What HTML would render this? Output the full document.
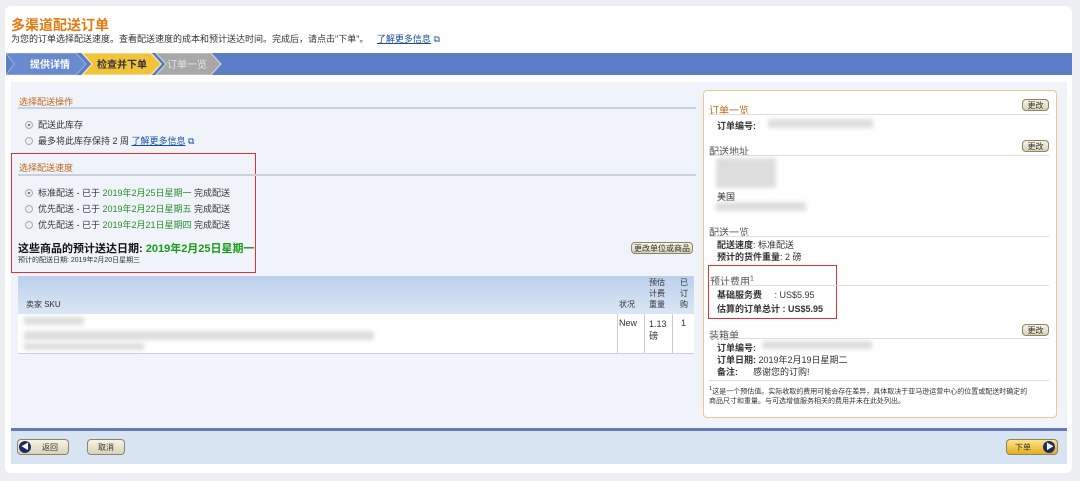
<!DOCTYPE html>
<html><head><meta charset="utf-8"><style>
*{margin:0;padding:0;box-sizing:border-box}
body{width:1080px;height:481px;background:#eceef1;font-family:"Liberation Sans","Noto Sans CJK SC",sans-serif;font-size:9px;color:#333;position:relative;overflow:hidden}
.a{position:absolute;white-space:nowrap}
.card{position:absolute;left:5px;top:6px;width:1067px;height:467px;background:#fff;border-radius:6px}
.g{color:#2a8a2a}
.blur{position:absolute;background:#ddd;filter:blur(2px)}
.btn{position:absolute;background:linear-gradient(#f7f3e4,#d8d2b8);border:1px solid #8a8468;border-radius:4px;font-size:8px;text-align:center;line-height:11px;height:12px}
.radio{display:inline-block;width:8px;height:8px;border:1px solid #aaa;border-radius:50%;background:#eee;vertical-align:-1px;margin-right:5px;position:relative}
.radio.on:after{content:"";position:absolute;left:2px;top:2px;width:2px;height:2px;border-radius:50%;background:#555}
.hr{position:absolute;height:2px;background:#c9d1dc}
.rhr{position:absolute;left:709px;width:340px;height:1px;background:#ddd}
.sec{color:#555;font-size:10px}
</style></head><body>
<div class="card"></div>
<div class="a" style="left:11px;top:15px;font-size:14px;color:#e47911;font-weight:bold">多渠道配送订单</div>
<div class="a" style="left:11px;top:32px;font-size:9px;color:#333">为您的订单选择配送速度。查看配送速度的成本和预计送达时间。完成后，请点击"下单"。 <span style="color:#1a4fa0;text-decoration:underline;margin-left:6px">了解更多信息</span> <span style="color:#1a4fa0">⧉</span></div>
<!-- nav bar -->
<div class="a" style="left:6px;top:53px;width:1066px;height:22px;background:#5b7dc6"></div>
<svg class="a" style="left:6px;top:53px" width="220" height="22">
<polygon points="0,0 70,0 80,11 70,22 0,22 8,11" fill="#6a8ad0" stroke="#9bb0e0"/>
<polygon points="76,0 145,0 155,11 145,22 76,22 86,11" fill="#f2c33a" stroke="#fff3c8"/>
<polygon points="150,0 205,0 215,11 205,22 150,22 160,11" fill="#a8a8a8" stroke="#d8d8d8"/>
<text x="24" y="15" fill="#fff" font-size="10" font-weight="bold" font-family="Noto Sans CJK SC">提供详情</text>
<text x="91" y="15" fill="#333" font-size="10" font-weight="bold" font-family="Noto Sans CJK SC">检查并下单</text>
<text x="161" y="15" fill="#e4e4e4" font-size="10" font-family="Noto Sans CJK SC">订单一览</text>
</svg>
<!-- content bg -->
<div class="a" style="left:11px;top:82px;width:1056px;height:346px;background:#f0f4fa"></div>
<div class="a" style="left:19px;top:95px;color:#c0651a">选择配送操作</div>
<div class="hr" style="left:18px;top:107px;width:678px"></div>
<div class="a" style="left:25px;top:118px"><span class="radio on"></span>配送此库存</div>
<div class="a" style="left:25px;top:134px"><span class="radio"></span>最多将此库存保持 2 周 <span style="color:#1a4fa0;text-decoration:underline">了解更多信息</span> <span style="color:#1a4fa0">⧉</span></div>
<div class="a" style="left:11px;top:153px;width:245px;height:120px;border:1.5px solid #d33"></div>
<div class="a" style="left:19px;top:161px;color:#c0651a">选择配送速度</div>
<div class="hr" style="left:18px;top:174px;width:678px"></div>
<div class="a" style="left:25px;top:186px"><span class="radio on"></span>标准配送 - 已于 <span class="g">2019年2月25日星期一</span> 完成配送</div>
<div class="a" style="left:25px;top:202px"><span class="radio"></span>优先配送 - 已于 <span class="g">2019年2月22日星期五</span> 完成配送</div>
<div class="a" style="left:25px;top:218px"><span class="radio"></span>优先配送 - 已于 <span class="g">2019年2月21日星期四</span> 完成配送</div>
<div class="a" style="left:18px;top:240px;font-size:11px;font-weight:bold;color:#111">这些商品的预计送达日期: <span style="color:#1a9a1a">2019年2月25日星期一</span></div>
<div class="a" style="left:18px;top:255px;font-size:7px">预计的配送日期: 2019年2月20日星期三</div>
<div class="btn" style="left:631px;top:242px;width:62px">更改单位或商品</div>
<!-- table -->
<div class="a" style="left:18px;top:276px;width:676px;height:38px;background:linear-gradient(#bcd0ec,#dbe6f4)"></div>
<div class="a" style="left:18px;top:314px;width:676px;height:40px;background:#fff;border-bottom:1px solid #ccd"></div>
<div class="a" style="left:26px;top:299px;font-size:8px">卖家 SKU</div>
<div class="a" style="left:619px;top:299px;font-size:8px">状况</div>
<div class="a" style="left:649px;top:277px;font-size:8px;line-height:11px;white-space:normal;width:20px">预估计费重量</div>
<div class="a" style="left:680px;top:277px;font-size:8px;line-height:11px;white-space:normal;width:9px">已订购</div>
<div class="a" style="left:617px;top:314px;width:1px;height:40px;background:#ccc"></div>
<div class="a" style="left:644px;top:314px;width:1px;height:40px;background:#ccc"></div>
<div class="a" style="left:672px;top:314px;width:1px;height:40px;background:#ccc"></div>
<div class="a" style="left:619px;top:318px">New</div>
<div class="a" style="left:649px;top:318px;line-height:12px">1.13<br>磅</div>
<div class="a" style="left:681px;top:318px">1</div>
<div class="blur" style="left:24px;top:317px;width:60px;height:8px"></div>
<div class="blur" style="left:24px;top:331px;width:350px;height:9px"></div>
<div class="blur" style="left:24px;top:343px;width:120px;height:7px"></div>
<!-- right box -->
<div class="a" style="left:703px;top:90px;width:354px;height:328px;background:#fff;border:1.5px solid #edc78e;border-radius:4px"></div>
<div class="a sec" style="left:709px;top:102px;color:#c0651a">订单一览</div>
<div class="btn" style="left:1022px;top:99px;width:27px">更改</div>
<div class="rhr" style="top:114px"></div>
<div class="a" style="left:717px;top:119px;font-weight:bold">订单编号:</div>
<div class="blur" style="left:768px;top:119px;width:105px;height:9px"></div>
<div class="a sec" style="left:709px;top:143px">配送地址</div>
<div class="btn" style="left:1022px;top:140px;width:27px">更改</div>
<div class="rhr" style="top:155px"></div>
<div class="blur" style="left:716px;top:158px;width:60px;height:30px"></div>
<div class="a" style="left:717px;top:190px">美国</div>
<div class="blur" style="left:716px;top:202px;width:90px;height:9px"></div>
<div class="a sec" style="left:709px;top:224px">配送一览</div>
<div class="rhr" style="top:236px"></div>
<div class="a" style="left:717px;top:238px"><b>配送速度</b>: 标准配送</div>
<div class="a" style="left:717px;top:250px"><b>预计的货件重量</b>: 2 磅</div>
<div class="a" style="left:708px;top:265px;width:129px;height:54px;border:1.5px solid #d33"></div>
<div class="a sec" style="left:710px;top:273px">预计费用<sup style="font-size:7px">1</sup></div>
<div class="rhr" style="top:285px"></div>
<div class="a" style="left:717px;top:288px"><b>基础服务费</b> &nbsp;&nbsp;&nbsp;&nbsp;: US$5.95</div>
<div class="a" style="left:717px;top:302px;font-weight:bold">估算的订单总计 : US$5.95</div>
<div class="a sec" style="left:709px;top:327px">装箱单</div>
<div class="btn" style="left:1022px;top:324px;width:27px">更改</div>
<div class="rhr" style="top:338px"></div>
<div class="a" style="left:717px;top:341px;font-weight:bold">订单编号:</div>
<div class="blur" style="left:762px;top:341px;width:110px;height:8px"></div>
<div class="a" style="left:717px;top:353px"><b>订单日期:</b> 2019年2月19日星期二</div>
<div class="a" style="left:717px;top:365px"><b>备注:</b> &nbsp;&nbsp;&nbsp;&nbsp;&nbsp;感谢您的订购!</div>
<div class="rhr" style="top:380px"></div>
<div class="a" style="left:709px;top:384px;font-size:7px;line-height:10px"><sup>1</sup>这是一个预估值。实际收取的费用可能会存在差异，具体取决于亚马逊运营中心的位置或配送时确定的<br>商品尺寸和重量。与可选增值服务相关的费用并未在此处列出。</div>
<!-- bottom -->
<div class="a" style="left:11px;top:428px;width:1056px;height:3px;background:#6678b8"></div>
<div class="a" style="left:11px;top:431px;width:1056px;height:33px;background:#d9e4f3"></div>
<div class="btn" style="left:17px;top:439px;width:52px;height:16px;line-height:15px;text-align:right;padding-right:10px">返回</div>
<div class="a" style="left:19px;top:441px;width:12px;height:12px;border-radius:50%;background:#1c2a6a"></div>
<div class="a" style="left:21px;top:441px;color:#fff;font-size:8px;line-height:12px">◀</div>
<div class="btn" style="left:87px;top:439px;width:38px;height:16px;line-height:15px">取消</div>
<div class="btn" style="left:1006px;top:439px;width:52px;height:16px;line-height:15px;text-align:left;padding-left:8px;background:linear-gradient(#fde38a,#e6ad1f)">下单</div>
<div class="a" style="left:1043px;top:441px;width:12px;height:12px;border-radius:50%;background:#1c2a6a"></div>
<div class="a" style="left:1046px;top:441px;color:#fff;font-size:8px;line-height:12px">▶</div>
</body></html>
